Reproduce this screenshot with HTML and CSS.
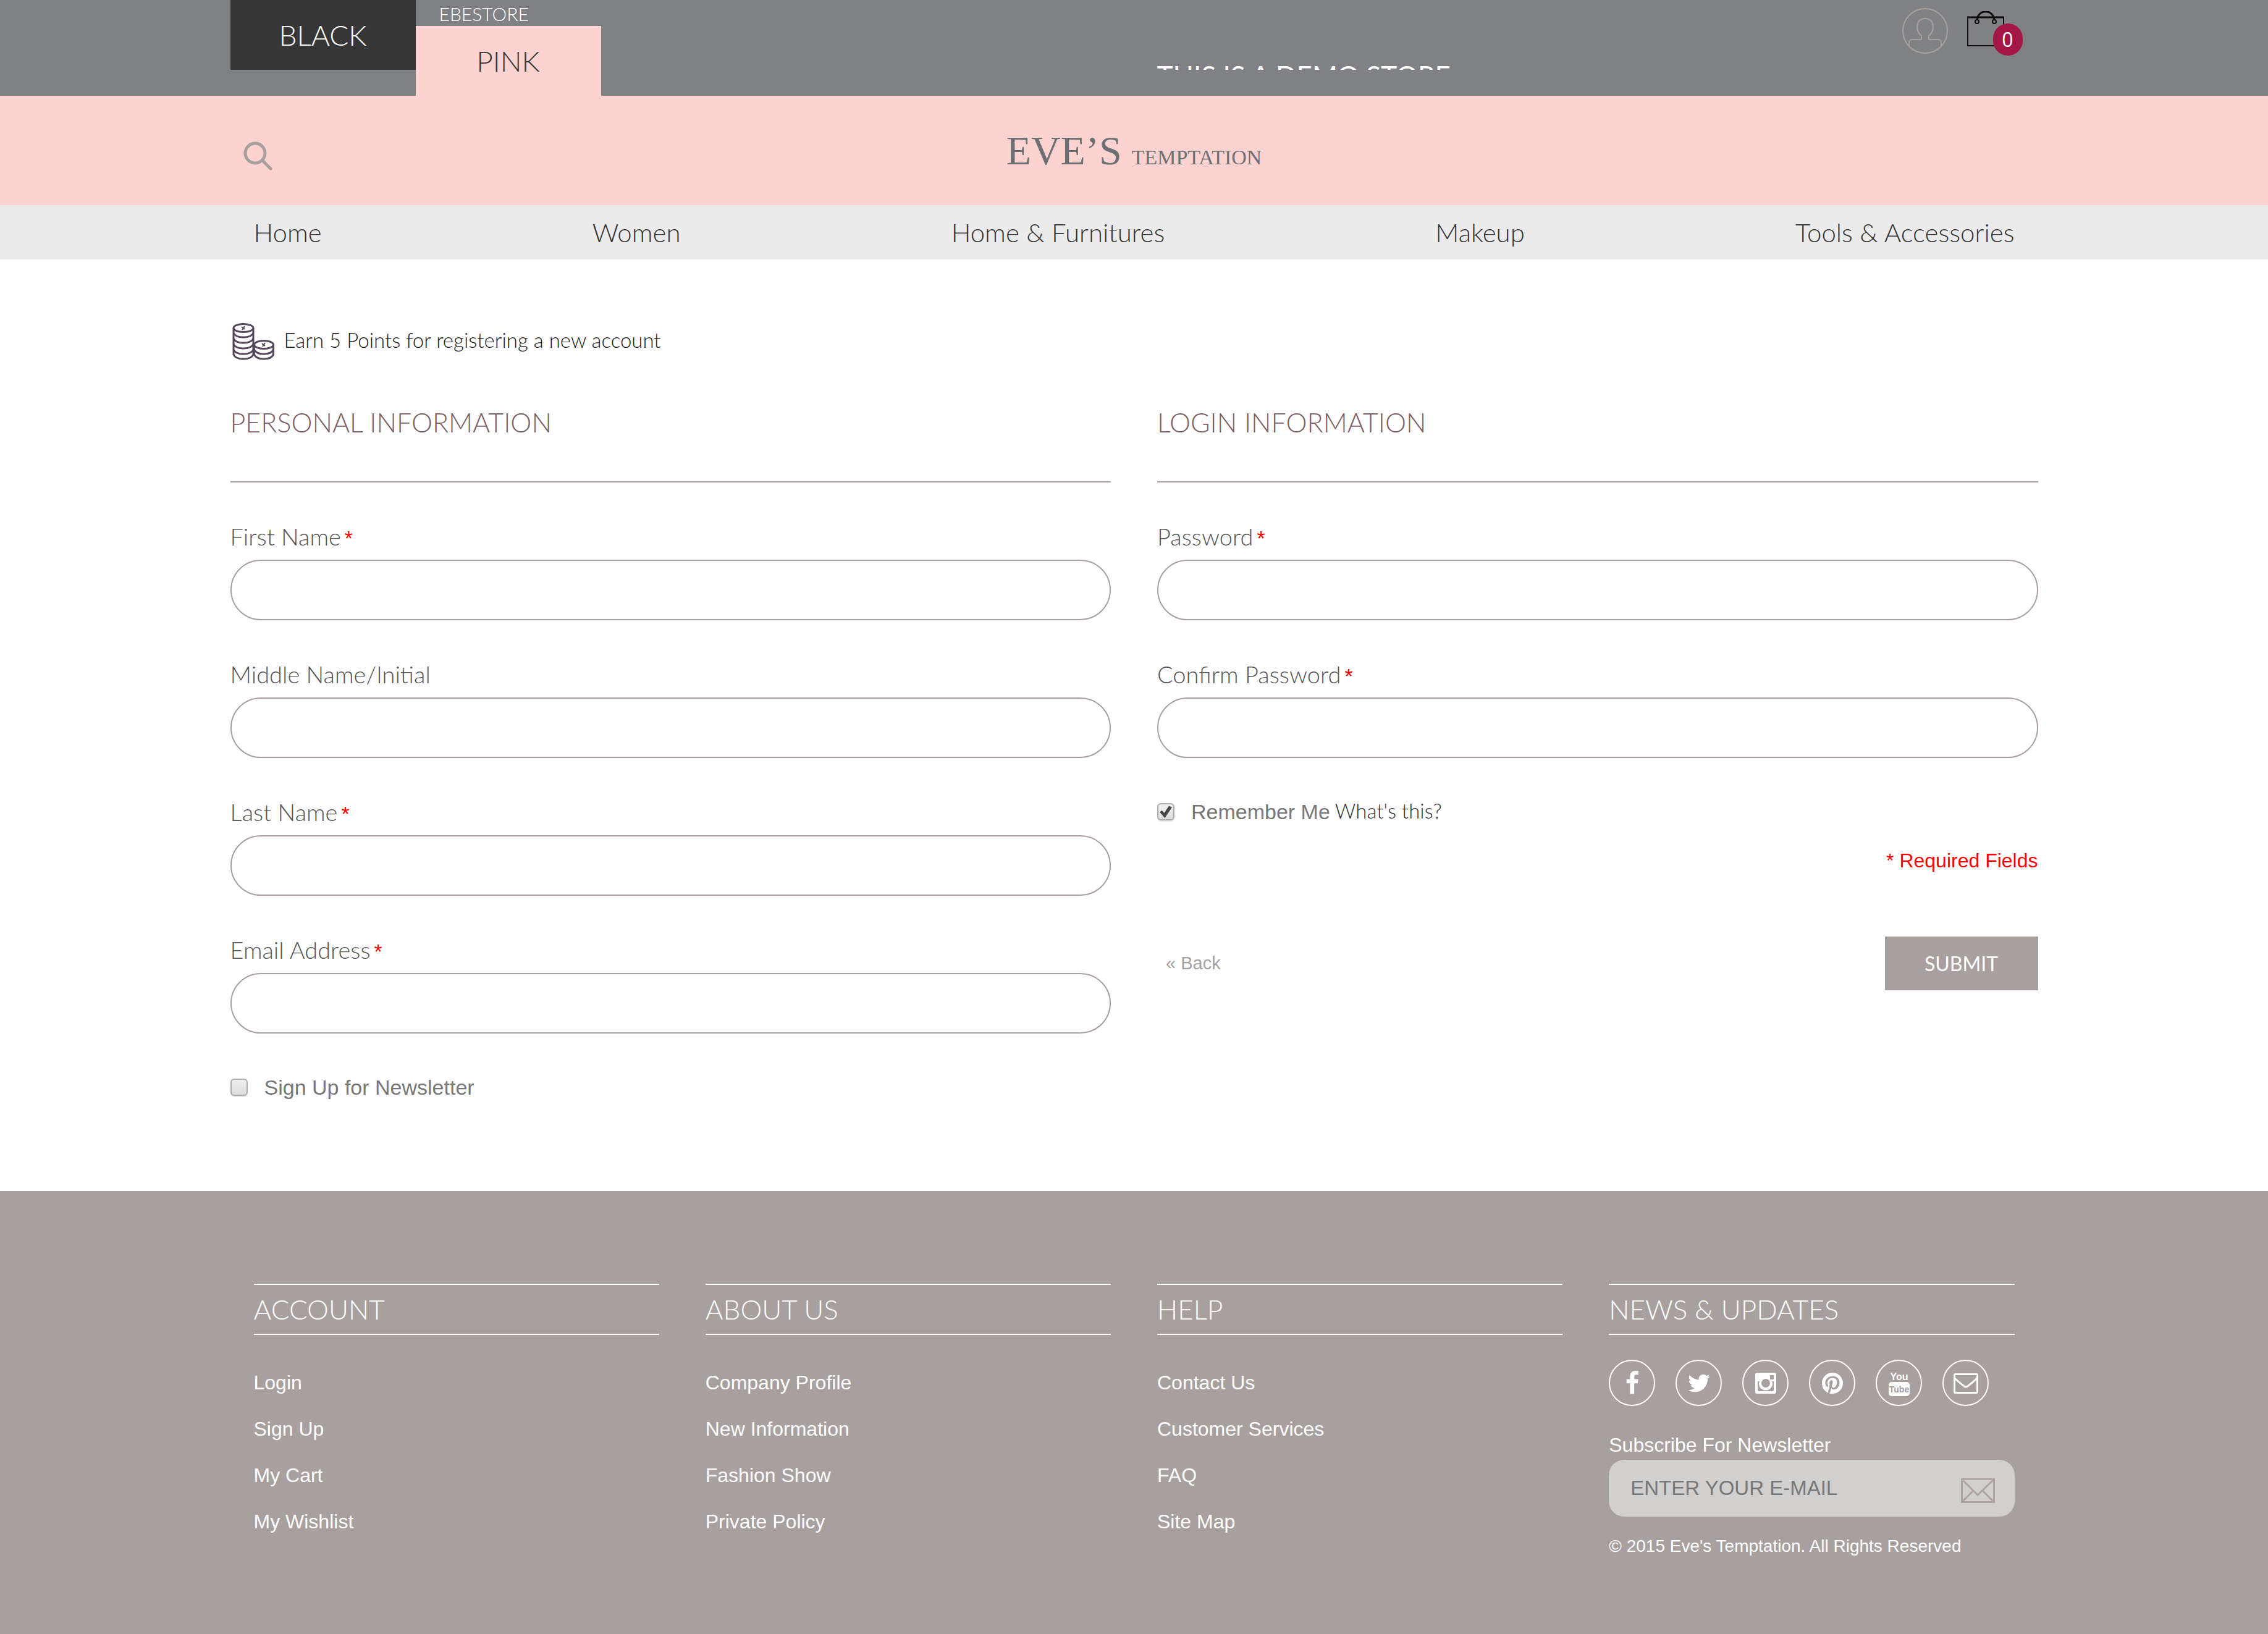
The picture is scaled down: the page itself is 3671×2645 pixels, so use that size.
FILE: index.html
```html
<!DOCTYPE html>
<html lang="en">
<head>
<meta charset="utf-8">
<meta name="viewport" content="width=device-width, initial-scale=1">
<title>Create New Customer Account - Eve's Temptation</title>
<link rel="stylesheet" href="styles.css">
</head>
<body>
<div class="topbar">
  <div class="container topbar-inner">
    <a class="tab tab-black" href="#">BLACK</a>
    <div class="store">
      <span class="store-name">EBESTORE</span>
      <a class="tab tab-pink" href="#">PINK</a>
    </div>
    <div class="ticker"><span>THIS IS A DEMO STORE</span></div>
    <div class="tools">
      <a class="account" href="#" aria-label="My account">
        <svg width="74" height="74" viewBox="0 0 74 74" fill="none" stroke="#a8a09e" stroke-width="2">
          <circle cx="37" cy="37" r="36"/>
          <path d="M11 61V56Q11 51 17 51H31V45Q24 39 24 30Q25 17 37 17Q49 17 50 30Q50 39 43 45V51H57Q63 51 63 56V61"/>
        </svg>
      </a>
      <a class="bag" href="#" aria-label="Shopping bag">
        <svg width="60" height="58" viewBox="0 0 60 58" fill="none" stroke="#0c0c0d">
          <path d="M0 10H60" stroke-width="3"/>
          <path d="M1 9V56H59V9" stroke-width="2"/>
          <path d="M16 15C17 -4 43 -4 44 15" stroke-width="3"/>
          <circle cx="16" cy="17" r="3" stroke-width="2"/>
          <circle cx="44" cy="17" r="3" stroke-width="2"/>
        </svg>
        <span class="badge">0</span>
      </a>
    </div>
  </div>
</div>

<header class="masthead">
  <div class="container masthead-inner">
    <button class="search" type="button" aria-label="Search">
      <svg width="47" height="47" viewBox="0 0 47 47" fill="none" stroke="#a8a09e" stroke-width="5" stroke-linecap="round">
        <circle cx="19" cy="19" r="16"/>
        <path d="M31 31L44 44"/>
      </svg>
    </button>
    <a class="logo" href="#"><span class="logo-big">EVE’S</span><span class="logo-small">TEMPTATION</span></a>
  </div>
</header>

<nav class="nav">
  <div class="container nav-inner">
    <a href="#">Home</a>
    <a href="#">Women</a>
    <a href="#">Home &amp; Furnitures</a>
    <a href="#">Makeup</a>
    <a href="#">Tools &amp; Accessories</a>
  </div>
</nav>

<main class="container main">
  <p class="points">
    <svg width="74" height="60" viewBox="0 0 74 60" fill="none" stroke="#54465c" stroke-width="3">
      <ellipse cx="21" cy="8" rx="16" ry="6.500"/>
      <path d="M5 8V52M37 8V52"/>
      <path d="M5 16Q8 23 21 23T37 16M5 25Q8 32 21 32T37 25M5 34Q8 41 21 41T37 34M5 43Q8 50 21 50T37 43M5 51Q8 58 21 58T37 51"/>
      <ellipse cx="54" cy="35" rx="15.500" ry="6.500"/>
      <path d="M38.500 35V52M69.500 35V52"/>
      <path d="M38.500 43Q42 50 54 50T69.500 43M38.500 51Q42 58 54 58T69.500 51"/>
      <path d="M18 6L23 10M23 5L19 11M51 33L56 37M56 32L52 38" stroke-width="2"/>
    </svg>
    Earn 5 Points for registering a new account
  </p>
  <form class="form">
    <section class="column">
      <h2 class="heading">PERSONAL INFORMATION</h2>
      <div class="field"><label for="first">First Name<em>*</em></label><input id="first" type="text"></div>
      <div class="field"><label for="middle">Middle Name/Initial</label><input id="middle" type="text"></div>
      <div class="field"><label for="last">Last Name<em>*</em></label><input id="last" type="text"></div>
      <div class="field"><label for="email">Email Address<em>*</em></label><input id="email" type="email"></div>
      <div class="check"><input id="news" type="checkbox"><label for="news">Sign Up for Newsletter</label></div>
    </section>
    <section class="column">
      <h2 class="heading">LOGIN INFORMATION</h2>
      <div class="field"><label for="pass">Password<em>*</em></label><input id="pass" type="password"></div>
      <div class="field"><label for="confirm">Confirm Password<em>*</em></label><input id="confirm" type="password"></div>
      <div class="check"><input id="remember" type="checkbox" checked><label for="remember">Remember Me</label><a class="hint" href="#">What's this?</a></div>
      <p class="required">* Required Fields</p>
      <div class="actions">
        <a class="back" href="#">« Back</a>
        <button class="submit" type="submit">SUBMIT</button>
      </div>
    </section>
  </form>
</main>

<footer class="footer">
  <div class="container footer-inner">
    <section>
      <h3 class="footer-title">ACCOUNT</h3>
      <ul class="links">
        <li><a href="#">Login</a></li>
        <li><a href="#">Sign Up</a></li>
        <li><a href="#">My Cart</a></li>
        <li><a href="#">My Wishlist</a></li>
      </ul>
    </section>
    <section>
      <h3 class="footer-title">ABOUT US</h3>
      <ul class="links">
        <li><a href="#">Company Profile</a></li>
        <li><a href="#">New Information</a></li>
        <li><a href="#">Fashion Show</a></li>
        <li><a href="#">Private Policy</a></li>
      </ul>
    </section>
    <section>
      <h3 class="footer-title">HELP</h3>
      <ul class="links">
        <li><a href="#">Contact Us</a></li>
        <li><a href="#">Customer Services</a></li>
        <li><a href="#">FAQ</a></li>
        <li><a href="#">Site Map</a></li>
      </ul>
    </section>
    <section>
      <h3 class="footer-title">NEWS &amp; UPDATES</h3>
      <div class="social">
        <a href="#" aria-label="Facebook"><svg viewBox="0 0 1792 1792"><path d="M1343 12v264h-157q-86 0-116 36t-30 108v189h293l-39 296h-254v759h-306v-759h-255v-296h255v-218q0-186 104-288.500t277-102.500q147 0 228 12z"/></svg></a>
        <a href="#" aria-label="Twitter"><svg viewBox="0 0 1792 1792"><path d="M1684 408q-67 98-162 167 1 14 1 42 0 130-38 259.500t-115.500 248.500-184.500 210.500-258 146-323 54.500q-271 0-496-145 35 4 78 4 225 0 401-138-105-2-188-64.500t-114-159.500q33 5 61 5 43 0 85-11-112-23-185.500-111.500t-73.500-205.500v-4q68 38 146 41-66-44-105-115t-39-154q0-88 44-163 121 149 294.500 238.500t371.500 99.500q-8-38-8-74 0-134 94.500-228.500t228.500-94.500q140 0 236 102 109-21 205-78-37 115-142 178 93-10 186-50z"/></svg></a>
        <a href="#" aria-label="Instagram"><svg viewBox="0 0 40 40"><path fill-rule="evenodd" d="M6 3H34Q37 3 37 6V34Q37 37 34 37H6Q3 37 3 34V6Q3 3 6 3ZM28 7Q27 7 27 8V13Q27 14 28 14H32Q33 14 33 13V8Q33 7 32 7ZM7 17V31Q7 33 9 33H31Q33 33 33 31V17H30Q31 19 31 21A11 10.500 0 0 1 9 21Q9 19 10 17ZM20 13A7 7 0 1 0 20 27A7 7 0 1 0 20 13Z"/></svg></a>
        <a href="#" aria-label="Pinterest"><svg viewBox="0 0 1792 1792"><path d="M1664 896q0 209-103 385.500t-279.500 279.500-385.500 103q-111 0-218-32 59-93 78-164 9-34 54-211 20 39 73 67.500t114 28.500q121 0 216-68.500t147-188.500 52-270q0-114-59.500-214t-172.500-163-255-63q-105 0-196 29t-154.500 77-109 110.500-67 129.500-21.500 134q0 104 40 183t117 111q30 12 38-20 2-7 8-31t8-30q6-23-11-43-51-61-51-151 0-151 104.500-259.500t273.500-108.500q151 0 235.500 82t84.500 213q0 170-68.500 289t-175.500 119q-61 0-98-43.500t-23-104.500q8-35 26.500-93.500t30-103 11.500-75.500q0-50-27-83t-77-33q-62 0-105 57t-43 142q0 73 25 122l-99 418q-17 70-13 177-206-91-333-281t-127-423q0-209 103-385.500t279.500-279.500 385.500-103 385.500 103 279.500 279.500 103 385.500z"/></svg></a>
        <a href="#" aria-label="YouTube"><svg viewBox="0 0 40 40"><text class="tube-top" x="20" y="15" text-anchor="middle">You</text><rect x="3" y="18" width="34" height="23" rx="5"/><text class="tube-low" x="20" y="35" text-anchor="middle">Tube</text></svg></a>
        <a href="#" aria-label="E-mail"><svg viewBox="0 0 40 40"><path d="M3 5.500H37Q38.500 5.500 38.500 7V34Q38.500 35.500 37 35.500H3Q1.500 35.500 1.500 34V7Q1.500 5.500 3 5.500ZM2 12Q8 18 16 24Q20 28 24 24Q32 18 38 12" fill="none" stroke="#fff" stroke-width="3"/></svg></a>
      </div>
      <label class="subscribe-label" for="subscribe">Subscribe For Newsletter</label>
      <div class="subscribe">
        <input id="subscribe" type="email" placeholder="ENTER YOUR E-MAIL">
        <button type="button" aria-label="Subscribe">
          <svg width="55" height="40" viewBox="0 0 55 40" fill="none" stroke="#aea4a2" stroke-width="3">
            <path d="M1.500 1.500H53.500V38.500H1.500ZM2 2L27 27L53 2M2 38L20 20M53 38L35 20"/>
          </svg>
        </button>
      </div>
      <p class="copyright">© 2015 Eve's Temptation. All Rights Reserved</p>
    </section>
  </div>
</footer>
</body>
</html>
```

FILE: styles.css
```css
* {
  box-sizing: border-box;
}

body {
  margin: 0;
  min-height: 100vh;
  display: flex;
  flex-direction: column;
  background: #fff;
  color: #777;
  font-family: "Liberation Sans", Arial, sans-serif;
  font-size: 32px;
}

h2,
h3,
p,
ul {
  margin: 0;
  padding: 0;
  font-weight: 400;
}

a {
  color: inherit;
  text-decoration: none;
}

button {
  border: 0;
  padding: 0;
  background: none;
  cursor: pointer;
}

svg {
  display: block;
  flex: none;
}

.container {
  width: 100%;
  max-width: 3000px;
  margin: 0 auto;
  padding: 0 37px;
}

.topbar,
.nav,
.points,
.heading,
.field label,
.hint,
.submit,
.footer-title {
  font-family: Lato, sans-serif;
  font-weight: 300;
}

/* Top bar */
.topbar {
  background: #808184;
  color: #fff;
}

.topbar-inner {
  display: grid;
  grid-template-columns: 300px 300px 900px 1fr;
  align-items: start;
  height: 155px;
}

.tab {
  display: flex;
  align-items: center;
  justify-content: center;
  height: 113px;
  font-size: 46px;
}

.tab-black {
  background: #363636;
}

.tab-pink {
  background: #fcd3d0;
  color: #363636;
}

.store-name {
  display: block;
  height: 42px;
  padding-left: 38px;
  font-size: 30px;
  line-height: 44px;
}

.ticker {
  grid-column: 4;
  grid-row: 1;
  height: 113px;
  overflow: hidden;
  font-size: 44px;
  font-weight: 400;
}

.ticker span {
  display: block;
  padding-top: 98px;
  line-height: 48px;
}

.tools {
  grid-column: 4;
  grid-row: 1;
  justify-self: end;
  display: flex;
  gap: 31px;
  padding: 13px 55px 0 0;
}

.bag {
  position: relative;
  padding-top: 5px;
}

.badge {
  position: absolute;
  left: 42px;
  top: 25px;
  width: 48px;
  height: 52px;
  border-radius: 24px;
  background: #a31545;
  font-family: "Open Sans", sans-serif;
  font-size: 32px;
  font-weight: 400;
  line-height: 52px;
  text-align: center;
}

/* Masthead */
.masthead {
  background: #fcd3d0;
}

.masthead-inner {
  display: grid;
  grid-template-columns: 1fr auto 1fr;
  align-items: center;
  height: 177px;
}

.search {
  justify-self: start;
  margin: 18px 0 0 21px;
}

.logo {
  display: flex;
  align-items: baseline;
  gap: 16px;
  font-family: "Liberation Serif", serif;
  color: #6d7072;
}

.logo-big {
  font-size: 66px;
}

.logo-small {
  font-size: 34px;
}

/* Navigation */
.nav {
  background: #ebebeb;
}

.nav-inner {
  display: flex;
  justify-content: space-between;
  padding: 0 75px;
  color: #333;
  font-size: 42px;
  line-height: 88px;
}

/* Registration form */
.main {
  padding-top: 103px;
  padding-bottom: 143px;
}

.points {
  display: flex;
  gap: 13px;
  height: 60px;
  margin-bottom: 71px;
  color: #222;
  font-size: 33px;
  line-height: 54px;
}

.form {
  display: grid;
  grid-template-columns: 1fr 1fr;
  gap: 75px;
}

.heading {
  margin-bottom: 62px;
  padding-bottom: 65px;
  border-bottom: 2px solid #a8a09e;
  color: #7d5f64;
  font-size: 43px;
  line-height: 60px;
}

.field {
  margin-bottom: 62px;
}

.field label {
  display: block;
  height: 50px;
  margin-bottom: 13px;
  color: #555;
  font-size: 38px;
  line-height: 50px;
}

.field em {
  margin-left: 6px;
  color: #f00;
  font-family: "Liberation Sans", Arial, sans-serif;
  font-size: 34px;
  font-style: normal;
  line-height: 1;
}

.field input {
  display: block;
  width: 100%;
  height: 98px;
  padding: 0 40px;
  border: 2px solid #a8a09e;
  border-radius: 49px;
  background: #fff;
  font-size: 34px;
}

.check {
  display: flex;
  align-items: center;
  height: 50px;
  font-size: 34px;
}

.check input {
  appearance: none;
  width: 28px;
  height: 28px;
  margin: 0 27px 0 0;
  border: 2px solid #aaa;
  border-radius: 6px;
  background: linear-gradient(#efefef, #dcdcdc);
  box-shadow: 0 2px 1px #e6e6e6;
}

.check input:checked::before {
  content: "";
  display: block;
  width: 20px;
  height: 20px;
  margin: 2px;
  background: #444;
  clip-path: polygon(0 52%, 18% 40%, 38% 60%, 75% 2%, 100% 14%, 42% 100%);
}

.hint {
  padding: 0 0 4px 8px;
  color: #333;
  font-size: 33px;
}

.required {
  margin: 29px 0 98px;
  color: #f00;
  line-height: 50px;
  text-align: right;
}

.actions {
  display: flex;
  align-items: center;
  justify-content: space-between;
}

.back {
  padding-left: 14px;
  color: #a8a09e;
  font-size: 29px;
}

.submit {
  width: 248px;
  height: 87px;
  background: #a8a09e;
  color: #fff;
  font-size: 32px;
  font-weight: 400;
}

/* Footer */
.footer {
  flex: 1;
  padding: 150px 0 120px;
  background: #a8a09e;
  color: #fff;
}

.footer-inner {
  display: grid;
  grid-template-columns: repeat(4, 1fr);
  gap: 75px;
  padding: 0 75px;
}

.footer-title {
  border: solid #fff;
  border-width: 2px 0;
  font-size: 44px;
  line-height: 79px;
}

.links {
  padding-top: 40px;
  list-style: none;
  line-height: 75px;
}

.social {
  display: flex;
  gap: 33px;
  padding-top: 40px;
}

.social a {
  display: flex;
  align-items: center;
  justify-content: center;
  width: 75px;
  height: 75px;
  border: 2px solid #fff;
  border-radius: 50%;
}

.social svg {
  width: 40px;
  height: 40px;
  fill: #fff;
  overflow: visible;
}

.tube-top,
.tube-low {
  font-family: "Liberation Sans Narrow", "Liberation Sans", sans-serif;
  font-size: 16px;
  font-weight: 700;
}

.tube-low {
  fill: #a8a09e;
  font-size: 14px;
}

.subscribe-label {
  display: block;
  padding-top: 40px;
  line-height: 47px;
}

.subscribe {
  display: flex;
  align-items: center;
  height: 92px;
  padding: 0 32px 0 35px;
  border-radius: 25px;
  background: #d1d0ce;
}

.subscribe input {
  flex: 1;
  min-width: 0;
  padding: 0;
  border: 0;
  background: none;
  font-family: inherit;
  font-size: 33px;
}

.subscribe input::placeholder {
  color: #777;
}

.subscribe button {
  padding-top: 8px;
}

.copyright {
  padding-top: 26px;
  font-size: 28px;
  line-height: 44px;
}
```
